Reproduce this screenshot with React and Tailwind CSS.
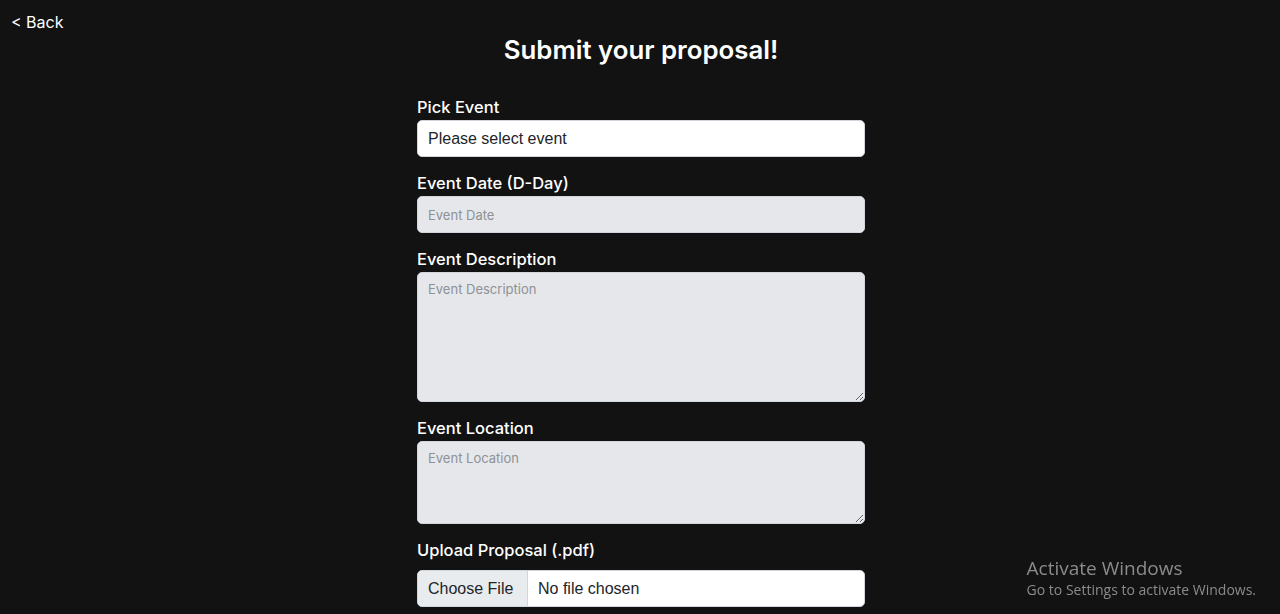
import React from 'react';

const Field = ({ label, children, spaced }) => (
  <div className="flex flex-col">
    <label className={`text-[16.5px] leading-6 font-medium text-white ${spaced ? 'mb-2' : 'mb-px'}`}>{label}</label>
    {children}
  </div>
);

const App = () => {
  return (
    <div className="min-h-screen bg-[#121212] font-['Inter',sans-serif] text-white relative">
      {/* Back link */}
      <div className="pt-[10px] pl-[11px] h-[34px]">
        <a href="#" className="text-base leading-6 text-white">&lt; Back</a>
      </div>

      <h1 className="text-center pl-[2px] text-[25.8px] leading-8 font-semibold">Submit your proposal!</h1>

      <div className="flex justify-center pl-[2px]">
        <form className="mt-[29px] w-[448px] flex flex-col gap-[14px] pb-10">
          <Field label="Pick Event">
            <div className="h-[37px] rounded-[5px] bg-white border border-gray-300 px-[10px] flex items-center font-['Liberation_Sans',Arial,sans-serif] text-[16px] text-[#212529]">
              Please select event
            </div>
          </Field>

          <Field label="Event Date (D-Day)">
            <input
              placeholder="Event Date"
              className="h-[37px] rounded-[5px] bg-[#e5e7eb] border border-gray-300 px-[10px] text-[13px] text-gray-800 placeholder:text-[#8e9196] outline-none"
            />
          </Field>

          <Field label="Event Description">
            <textarea
              placeholder="Event Description"
              className="h-[130px] rounded-[5px] bg-[#e5e7eb] border border-gray-300 px-[10px] pt-[7px] text-[13px] text-gray-800 placeholder:text-[#8e9196] outline-none"
            />
          </Field>

          <Field label="Event Location">
            <textarea
              placeholder="Event Location"
              className="h-[83px] rounded-[5px] bg-[#e5e7eb] border border-gray-300 px-[10px] pt-[7px] text-[13px] text-gray-800 placeholder:text-[#8e9196] outline-none"
            />
          </Field>

          <Field label="Upload Proposal (.pdf)" spaced>
            <div className="h-[37px] rounded-[5px] bg-white border border-gray-300 overflow-hidden flex font-['Liberation_Sans',Arial,sans-serif] text-[16px] text-[#212529]">
              <span className="w-[110px] bg-[#e9ecef] border-r border-gray-300 flex items-center pl-[10px]">Choose File</span>
              <span className="flex items-center pl-[10px]">No file chosen</span>
            </div>
          </Field>
        </form>
      </div>

      {/* OS watermark */}
      <div className="fixed right-[24px] bottom-[14px] text-[#8b8b8b] font-['Open_Sans',sans-serif] pointer-events-none">
        <div className="text-[19px] leading-6">Activate Windows</div>
        <div className="text-[14px] leading-5">Go to Settings to activate Windows.</div>
      </div>
    </div>
  );
};

export default App;
